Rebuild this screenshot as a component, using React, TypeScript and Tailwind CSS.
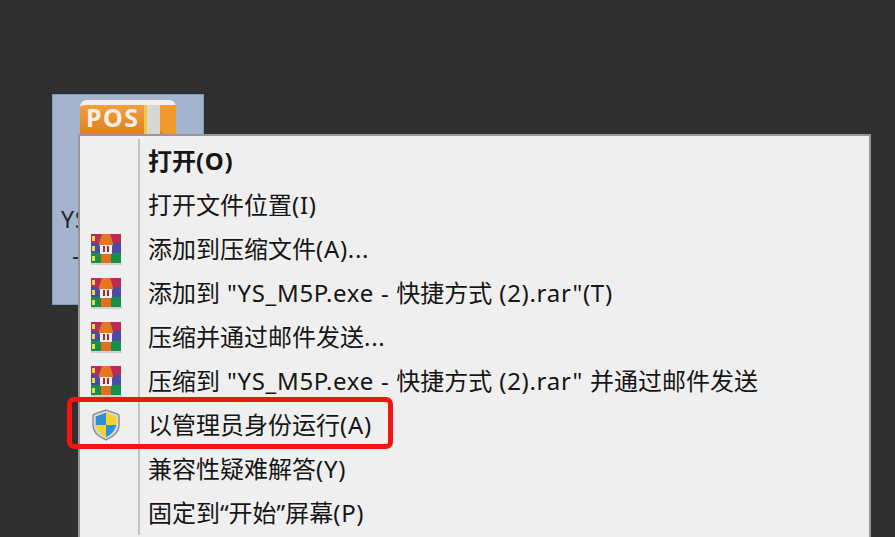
const font = { fontFamily: '"Noto Sans", "Noto Sans CJK SC", sans-serif' };

function RarIcon() {
  return (
    <svg width="32" height="32" viewBox="0 0 32 32">
      <path d="M1 1 H31 V10 H1 Z" fill="#bd2a55" />
      <path d="M1 10 H31 V20 H1 Z" fill="#4a4ba6" />
      <path d="M1 20 H31 V30 H1 Z" fill="#159049" />
      <rect x="1" y="30" width="31" height="2" fill="#d0d0d0" />
      <rect x="2" y="3" width="3" height="5" fill="#ecdc3c" />
      <rect x="2" y="13" width="3" height="5" fill="#ecdc3c" />
      <rect x="2" y="23" width="3" height="5" fill="#ecdc3c" />
      <path d="M12 1 H20 L23 10 V13 H9 V10 Z" fill="#e8761f" />
      <path d="M11 20 H21 V30 H11 Z" fill="#e2701f" />
      <rect x="10" y="12" width="12" height="9" rx="1" fill="#f5eeee" />
      <rect x="13" y="13" width="2" height="6" fill="#a3262d" />
      <rect x="17" y="13" width="2" height="6" fill="#a3262d" />
    </svg>
  );
}

function Shield() {
  return (
    <svg width="28" height="32" viewBox="0 0 30 34">
      <path d="M15 1 L27 5 Q29 5.500 29 8 L29 17 Q29 27 15 33 Q1 27 1 17 L1 8 Q1 5.500 3 5 Z" fill="#d8d8d8" stroke="#8c8c8c" strokeWidth="1.500" />
      <path d="M15 4 L15 17 L4 17 L4 8 Z" fill="#2f8fdc" />
      <path d="M15 4 L26 8 L26 17 L15 17 Z" fill="#f6d32c" />
      <path d="M4 17 L15 17 L15 30 Q6 26 4 17 Z" fill="#f6d32c" />
      <path d="M15 17 L26 17 Q24 26 15 30 Z" fill="#2f8fdc" />
    </svg>
  );
}

const rows: { label: string; icon?: "rar" | "shield"; bold?: boolean }[] = [
  { label: "打开(O)", bold: true },
  { label: "打开文件位置(I)" },
  { label: "添加到压缩文件(A)...", icon: "rar" },
  { label: '添加到 "YS_M5P.exe - 快捷方式 (2).rar"(T)', icon: "rar" },
  { label: "压缩并通过邮件发送...", icon: "rar" },
  { label: '压缩到 "YS_M5P.exe - 快捷方式 (2).rar" 并通过邮件发送', icon: "rar" },
  { label: "以管理员身份运行(A)", icon: "shield" },
  { label: "兼容性疑难解答(Y)" },
  { label: "固定到“开始”屏幕(P)" },
];

function Label({ text }: { text: string }) {
  const parts = text.split(/([\u4e00-\u9fff“”]+)/);
  return (
    <>
      {parts.map((p, i) =>
        i % 2 === 1 ? (
          <span key={i}>{p}</span>
        ) : (
          <span key={i} className="tracking-[0.7px]">{p}</span>
        ),
      )}
    </>
  );
}

export default function App() {
  return (
    <div className="relative w-[895px] h-[537px] overflow-hidden bg-[#2f2f2f] pl-[52px] pt-[94px]" style={font}>
      {/* selected desktop tile */}
      <div className="w-[152px] h-[211px] bg-[#a4b4cd] border border-[#7f9cc6] flex flex-col items-center pt-[5px]">
        <div className="w-[96px] h-[37px] rounded-t-[7px] bg-gradient-to-b from-[#f0a040] to-[#e07f1c] border-t-[5px] border-b-[3px] border-t-[#f2f1ec] border-b-[#b9b9b4] flex items-center pl-[6px] shrink-0">
          <span className="text-[25px] leading-[25px] font-bold tracking-[1.5px] text-[#f5efe6] -mt-[4px]">POS</span>
          <div className="ml-[4px] w-[3px] h-full bg-[#f5c542]" />
          <div className="w-[13px] h-full bg-[#d8d8d2]" />
          <div className="flex-1 h-full bg-[#ef9a2e] rounded-l-[6px]" />
        </div>
        <div className="mt-[64px] text-center whitespace-nowrap text-[23px] leading-[36px] tracking-[1px] text-[#232832]">
          <div>YS_M5P.exe</div>
          <div>- 快捷方式</div>
        </div>
      </div>

      {/* context menu */}
      <div className="absolute left-[78px] top-[134px] w-[793px] h-[420px] bg-[#efefef] border-2 border-[#979797] pt-[3px]">
        {rows.map((r) => (
          <div key={r.label} className="flex items-center h-[44px]">
            <div className="w-[60px] h-full shrink-0 border-r-2 border-[#c4c4c4] flex items-center pl-[10px]">
              {r.icon === "rar" && <RarIcon />}
              {r.icon === "shield" && <div className="pl-[2px] flex"><Shield /></div>}
            </div>
            <span className={`pl-[8px] text-[24px] leading-none whitespace-nowrap text-[#161616] ${r.bold ? "font-bold" : ""}`}>
              <Label text={r.label} />
            </span>
          </div>
        ))}
      </div>

      {/* red highlight */}
      <div className="absolute left-[67px] top-[397px] w-[326px] h-[52px] rounded-[7px] border-[5px] border-[#f5150f]" />
    </div>
  );
}
